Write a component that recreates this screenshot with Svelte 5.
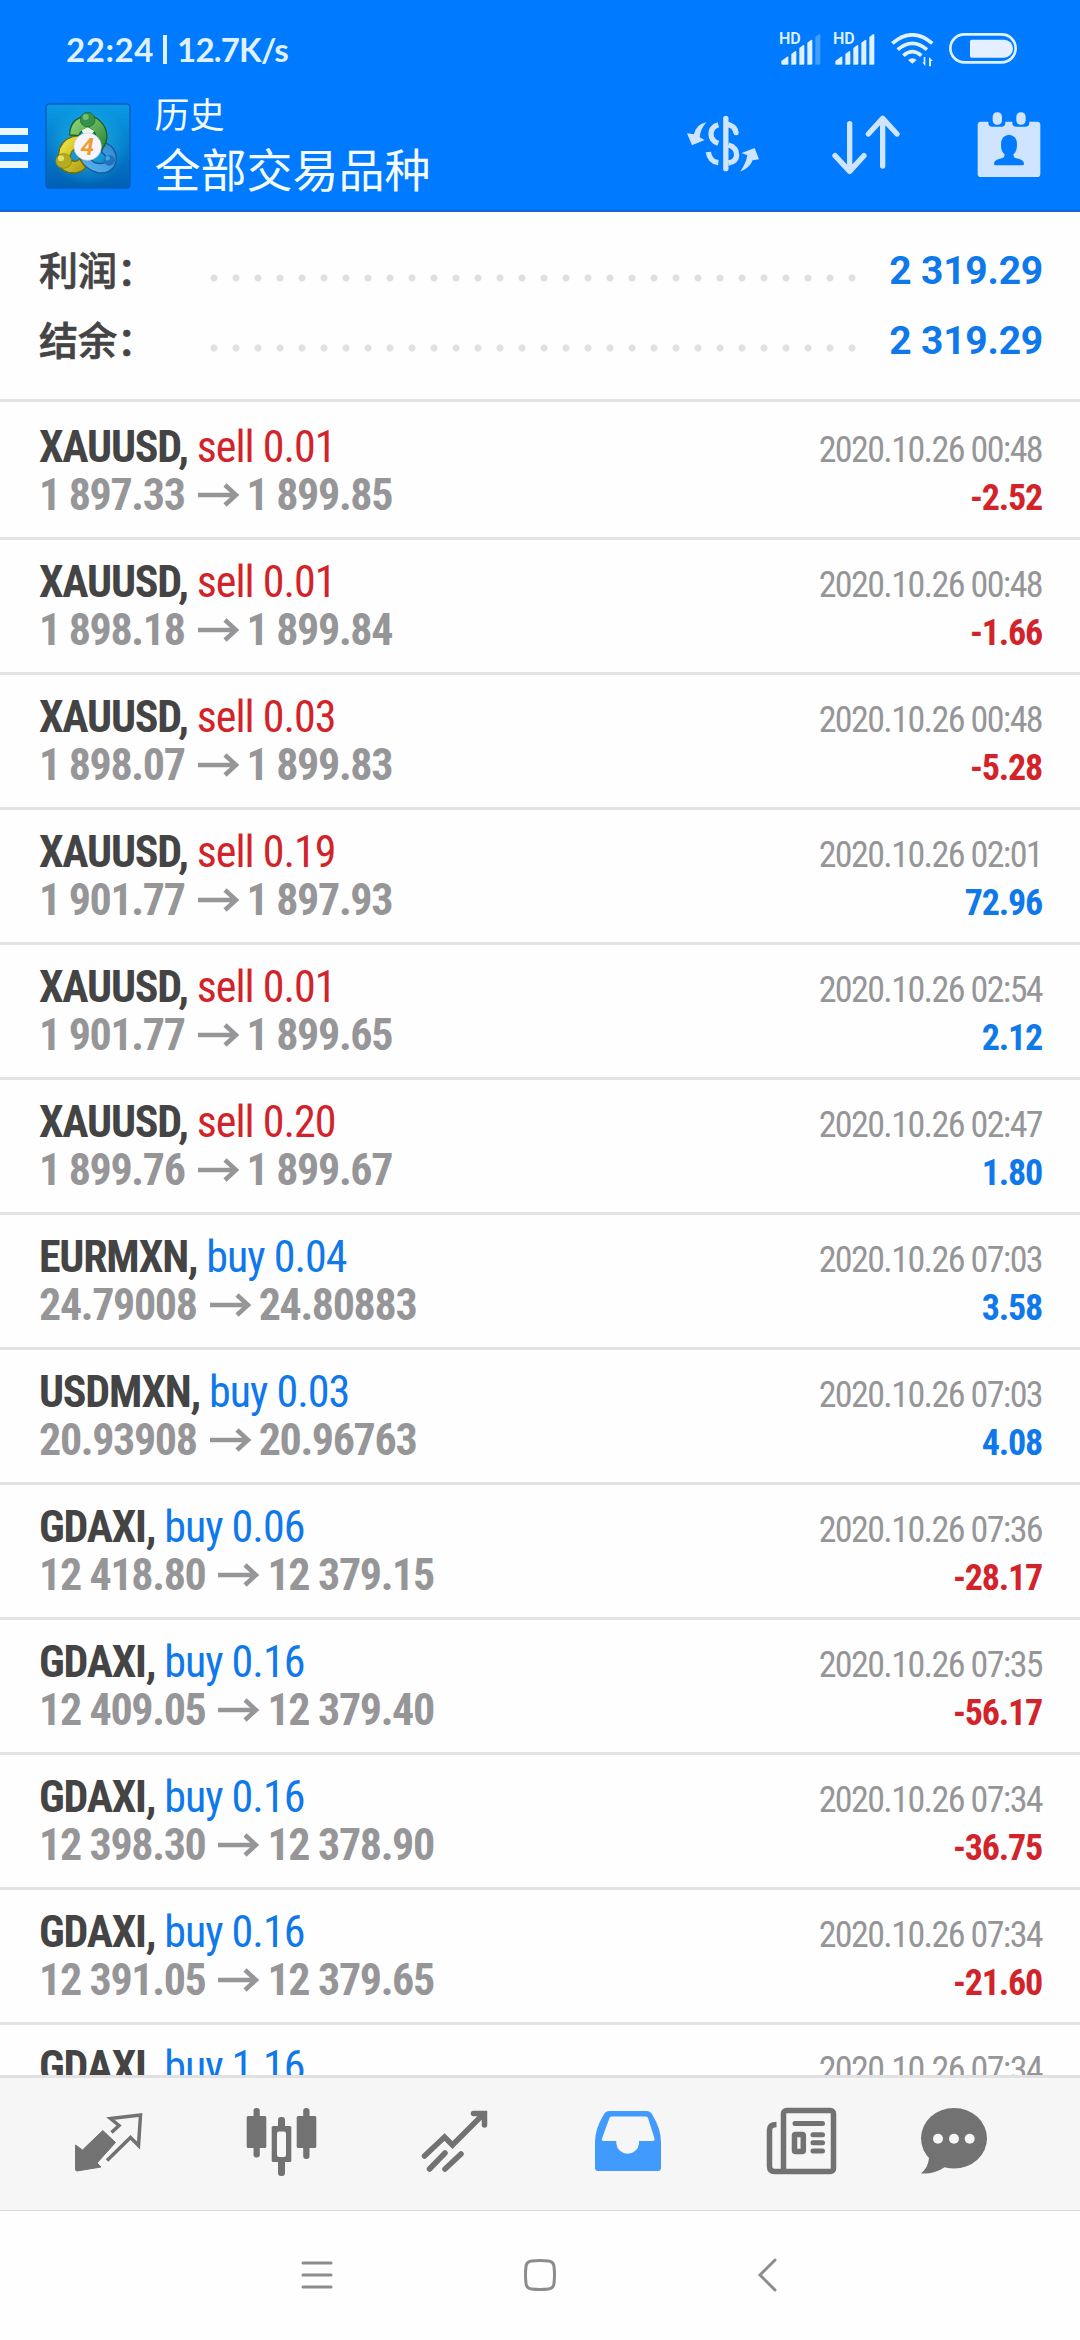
<script>
  const summary = [
    { label: '利润：', value: '2 319.29' },
    { label: '结余：', value: '2 319.29' },
  ];

  const deals = [
    { symbol: 'XAUUSD', side: 'sell', lots: '0.01', open: '1 897.33', close: '1 899.85', time: '2020.10.26 00:48', profit: '-2.52' },
    { symbol: 'XAUUSD', side: 'sell', lots: '0.01', open: '1 898.18', close: '1 899.84', time: '2020.10.26 00:48', profit: '-1.66' },
    { symbol: 'XAUUSD', side: 'sell', lots: '0.03', open: '1 898.07', close: '1 899.83', time: '2020.10.26 00:48', profit: '-5.28' },
    { symbol: 'XAUUSD', side: 'sell', lots: '0.19', open: '1 901.77', close: '1 897.93', time: '2020.10.26 02:01', profit: '72.96' },
    { symbol: 'XAUUSD', side: 'sell', lots: '0.01', open: '1 901.77', close: '1 899.65', time: '2020.10.26 02:54', profit: '2.12' },
    { symbol: 'XAUUSD', side: 'sell', lots: '0.20', open: '1 899.76', close: '1 899.67', time: '2020.10.26 02:47', profit: '1.80' },
    { symbol: 'EURMXN', side: 'buy', lots: '0.04', open: '24.79008', close: '24.80883', time: '2020.10.26 07:03', profit: '3.58' },
    { symbol: 'USDMXN', side: 'buy', lots: '0.03', open: '20.93908', close: '20.96763', time: '2020.10.26 07:03', profit: '4.08' },
    { symbol: 'GDAXI', side: 'buy', lots: '0.06', open: '12 418.80', close: '12 379.15', time: '2020.10.26 07:36', profit: '-28.17' },
    { symbol: 'GDAXI', side: 'buy', lots: '0.16', open: '12 409.05', close: '12 379.40', time: '2020.10.26 07:35', profit: '-56.17' },
    { symbol: 'GDAXI', side: 'buy', lots: '0.16', open: '12 398.30', close: '12 378.90', time: '2020.10.26 07:34', profit: '-36.75' },
    { symbol: 'GDAXI', side: 'buy', lots: '0.16', open: '12 391.05', close: '12 379.65', time: '2020.10.26 07:34', profit: '-21.60' },
    { symbol: 'GDAXI', side: 'buy', lots: '1.16', open: '', close: '', time: '2020.10.26 07:34', profit: '' },
  ];

  // weak = last bar dimmed
  const sims = [{ weak: true }, { weak: false }];
</script>

<div class="screen">
  <header>
    <div class="status">
      <div class="clock"><span>22:24</span><i></i><span class="speed">12.7K/s</span></div>
      <div class="status-icons">
        {#each sims as sim}
          <div class="sim">
            <span class="hd">HD</span>
            <svg width="42" height="32" viewBox="0 0 126 96">
              <path d="M4 92v-8l17-13q4-2 4 2v19q0 3-3 3H6z" />
              <path d="M34 95V63l11-8q4-2 4 2v35l-2 3z" />
              <path d="M58 95V45l11-8q4-2 4 2v53l-2 3z" />
              <path d="M82 95V29l11-8q4-2 4 2v69l-2 3z" />
              <path d="M106 95V12l11-8q4-2 4 2v86l-2 3z" opacity={sim.weak ? 0.3 : 1} />
            </svg>
          </div>
        {/each}
        <svg class="wifi" width="43" height="34" viewBox="0 0 129 102">
          <g fill="none" stroke="#dff1ff" stroke-width="11">
            <path d="M4 31Q64-20 124 31" />
            <path d="M20 50Q64 12 108 50" />
            <path d="M37 68Q64 44 91 68" />
          </g>
          <path d="M51 81q13-11 26 0l-13 11z" />
          <path d="M103 72v28L94 88h4V72zM114 100V72l12 12h-6v16z" />
        </svg>
        <svg width="68" height="31" viewBox="0 0 204 93">
          <rect x="4" y="4" width="196" height="84" rx="42" fill="none" stroke="#dff1ff" stroke-width="8" />
          <path d="M68 20H165a27 27 0 0 1 0 54H68q-5 0-5-5V25q0-5 5-5z" fill="#e4efff" />
        </svg>
      </div>
    </div>

    <div class="toolbar">
      <div class="burger"><i></i><i></i><i></i></div>
      <svg class="logo" width="86" height="86" viewBox="0 0 258 258">
        <defs>
          <linearGradient id="tile" x1="0" y1="0" x2="0" y2="1">
            <stop offset="0" stop-color="#0a9ae4" />
            <stop offset="1" stop-color="#0060b4" />
          </linearGradient>
          <radialGradient id="glow">
            <stop offset="0" stop-color="#27c3e8" stop-opacity=".8" />
            <stop offset="1" stop-color="#27c3e8" stop-opacity="0" />
          </radialGradient>
          <linearGradient id="green" x1="0" y1="0" x2="1" y2="1">
            <stop offset="0" stop-color="#9bdc7b" />
            <stop offset="1" stop-color="#1f7f33" />
          </linearGradient>
          <linearGradient id="yellow" x1="0" y1="0" x2="1" y2="1">
            <stop offset="0" stop-color="#fff04a" />
            <stop offset="1" stop-color="#a99a13" />
          </linearGradient>
          <linearGradient id="blue" x1="1" y1="0" x2="0" y2="1">
            <stop offset="0" stop-color="#2c86cf" />
            <stop offset="1" stop-color="#5fb9f0" />
          </linearGradient>
        </defs>
        <rect x="3" y="3" width="252" height="252" rx="10" fill="url(#tile)" stroke="#0b5cb8" stroke-width="4" />
        <circle cx="128" cy="128" r="120" fill="url(#glow)" />
        <path d="M175 118Q214 128 214 172Q206 212 160 210Q122 200 104 168L134 164Q150 190 182 178Q190 160 170 148z" fill="url(#blue)" stroke="#16579c" stroke-width="4" />
        <path d="M102 98Q60 100 44 136L36 176Q50 212 92 210Q112 206 122 194L104 168Q88 182 76 168Q72 142 100 134z" fill="url(#yellow)" stroke="#6b6b14" stroke-width="4" />
        <path d="M74 96Q74 54 110 42H148Q186 62 186 104Q182 130 166 144L150 116Q158 86 130 74Q108 80 102 98z" fill="url(#green)" stroke="#17602a" stroke-width="4" />
        <path d="M110 82l18-10 20 12-10 12h-20z" fill="#e9f7e4" />
        <circle cx="128" cy="50" r="22" fill="#379148" stroke="#17602a" stroke-width="2" />
        <circle cx="122" cy="42" r="9" fill="#74bd72" />
        <ellipse cx="56" cy="174" rx="24" ry="22" fill="#b4ad22" stroke="#7c7815" stroke-width="2" />
        <circle cx="48" cy="166" r="9" fill="#e4e060" />
        <ellipse cx="193" cy="172" rx="17" ry="16" fill="#1f72bd" />
        <circle cx="188" cy="166" r="7" fill="#4ba0e0" />
        <circle cx="128" cy="131" r="41" fill="#f6f5fb" stroke="#ccd3d8" stroke-width="2" />
        <text x="127" y="157" text-anchor="middle" font-family="Roboto, sans-serif" font-style="italic" font-weight="600" font-size="74" fill="#f39a2c">4</text>
      </svg>
      <div class="titles">
        <div class="title">历史</div>
        <div class="subtitle">全部交易品种</div>
      </div>
      <div class="actions">
        <svg width="76" height="66" viewBox="132 338 228 198">
          <path d="M196 369Q166 374 159 405L138 402L153 438L191 422L176 414Q178 390 196 369z" />
          <path d="M298 516Q325 508 335 483L354 480L341 446L302 461L319 468Q315 493 298 516z" />
          <g fill="none" stroke="#cfe4ff" stroke-width="16">
            <path d="M254.500 357V508" stroke-linecap="round" />
            <path d="M232 376Q210 383 210 404Q210 425 232 432M202 458Q206 487 232 490M262 437Q287 444 287 466Q287 487 262 491" />
            <path d="M262 376Q282 381 285 400" stroke-linecap="round" />
          </g>
        </svg>
        <svg width="72" height="66" viewBox="567 338 216 198">
          <g fill="none" stroke="#cfe4ff" stroke-width="16" stroke-linecap="round" stroke-linejoin="round">
            <path d="M626 373V516M582 469L626 516L669 469" />
            <path d="M725 500V357M682 404L725 357L768 404" />
          </g>
        </svg>
        <svg width="66" height="66" viewBox="1005 338 198 198">
          <rect x="1010" y="367" width="188" height="166" rx="10" />
          <path d="M1042 360h51v10q0 12-12 12h-27q-12 0-12-12zM1114 360h51v10q0 12-12 12h-27q-12 0-12-12z" fill="#007aff" />
          <rect x="1055" y="339" width="28" height="37" rx="13" />
          <rect x="1126" y="339" width="28" height="37" rx="13" />
          <path d="M1104 406q24 2 24 30q0 20-11 29q0 8 4 10l20 6q8 4 8 12q0 5-5 5h-80q-5 0-5-5q0-8 8-12l20-6q4-2 4-10q-11-9-11-29q0-28 24-30z" fill="#007aff" />
        </svg>
      </div>
    </div>
  </header>

  <section class="summary">
    {#each summary as s}
      <div class="sum-row">
        <span class="sum-label">{s.label}</span>
        <span class="dots"></span>
        <span class="sum-value">{s.value}</span>
      </div>
    {/each}
  </section>

  <main>
    {#each deals as d}
      <div class="deal">
        <div class="left">
          <div class="name"><b>{d.symbol},</b> <span class={d.side}>{d.side} {d.lots}</span></div>
          {#if d.open}
            <div class="prices">
              <span>{d.open}</span>
              <svg width="42" height="24" viewBox="0 0 42 24"><path d="M0 12H38M27 2L38 12L27 22" fill="none" stroke="#969698" stroke-width="4.500" /></svg>
              <span>{d.close}</span>
            </div>
          {/if}
        </div>
        <div class="right">
          <div class="time">{d.time}</div>
          <div class="profit" class:loss={d.profit.startsWith('-')}>{d.profit}</div>
        </div>
      </div>
    {/each}
  </main>

  <nav class="tabs">
    <!-- Quotes -->
    <svg width="72" height="80" viewBox="72.5 0 72 80">
      <path d="M75 45L82 50L102.300 30.500L115 42.500L96.500 63L100.500 67L76.500 71Q75 71 75 69z" stroke="#727272" stroke-linejoin="round" />
      <path d="M111 32.500L118.500 25.500L110 18.500L140 15L138 45.500L130 37.500L106.500 60.500" fill="none" stroke="#727272" stroke-width="3.500" />
    </svg>
    <!-- Charts -->
    <svg width="72" height="80" viewBox="245.500 0 72 80">
      <rect x="246.200" y="16" width="19.600" height="32" rx="1.500" />
      <rect x="253" y="8" width="6.300" height="49.500" rx="3" />
      <rect x="296.200" y="16" width="19.600" height="32" rx="1.500" />
      <rect x="302.700" y="8" width="6.300" height="51" rx="3" />
      <rect x="277.500" y="17" width="7" height="59" rx="3" />
      <rect x="271.200" y="26" width="19.600" height="36" rx="1.500" />
      <rect x="276.500" y="31.500" width="9" height="25.500" rx="2" fill="#f6f6f6" />
    </svg>
    <!-- Trade -->
    <svg width="72" height="80" viewBox="418.500 0 72 80">
      <g fill="none" stroke="#727272" stroke-width="5.500">
        <path d="M424 56L444 37L452 45L483 14" stroke-linecap="round" />
        <path d="M473 13.500H484V25" stroke-linecap="round" />
        <path d="M444.500 53L429 69M460.500 54L444.500 69" stroke-linecap="round" />
      </g>
    </svg>
    <!-- History -->
    <svg width="72" height="80" viewBox="591.500 0 72 80">
      <path fill="#419bff" fill-rule="evenodd" d="M609 11H646Q650 11 652 15Q660.500 29 660.500 42V68Q660.500 71 657.500 71H597.500Q594.500 71 594.500 68V42Q594.500 29 603 15Q605 11 609 11zM611 16.500Q609.500 16.500 609 18L601.500 38.500Q601 41 603 41H615.800V43.500A11.400 11.400 0 0 0 638.500 43.500V41H652Q654.500 41 654 38.500L647.500 18Q647 16.500 645.500 16.500z" />
    </svg>
    <!-- News -->
    <svg width="72" height="80" viewBox="764.500 0 72 80">
      <g fill="none" stroke="#727272" stroke-width="5.500">
        <rect x="783" y="10.500" width="50" height="61" rx="3" />
        <path d="M776 24.500Q769 24.500 769 30V66Q769 71.500 774 71.500H785" />
        <rect x="794" y="34.500" width="8.800" height="17" rx="1" />
        <path d="M794.500 23.500H822M812.500 34.700H822M812.500 42.700H822M812.500 51H822" stroke-width="5" stroke-linecap="round" />
      </g>
    </svg>
    <!-- Chat -->
    <svg width="72" height="80" viewBox="916 0 72 80">
      <ellipse cx="953" cy="38.300" rx="33" ry="30.300" />
      <path d="M926 52L928 58Q927 68 920 73.500Q933 74.500 944 67z" />
      <g fill="#f6f6f6">
        <circle cx="937" cy="38.700" r="5" />
        <circle cx="953" cy="38.700" r="5" />
        <circle cx="968.700" cy="38.700" r="5" />
      </g>
    </svg>
  </nav>

  <footer>
    <svg width="36" height="36" viewBox="0 0 36 36"><path d="M4 6H32M4 18H32M4 30H32" /></svg>
    <svg width="36" height="36" viewBox="0 0 36 36"><path d="M9.500 4Q18 3 26.500 4Q31.500 4.500 32 9.500Q33 18 32 26.500Q31.500 31.500 26.500 32Q18 33 9.500 32Q4.500 31.500 4 26.500Q3 18 4 9.500Q4.500 4.500 9.500 4z" /></svg>
    <svg width="36" height="36" viewBox="0 0 36 36"><path d="M30 3L15 18L30 33" /></svg>
  </footer>
</div>

<style>
  :global(body) {
    margin: 0;
    background: #fff;
  }

  .screen {
    width: 1080px;
    height: 2340px;
    display: flex;
    flex-direction: column;
    overflow: hidden;
    background: #fefefe;
    font-family: Roboto, 'Noto Sans CJK SC', sans-serif;
  }

  svg {
    display: block;
    flex: none;
  }

  header {
    height: 210px;
    flex: none;
    background: #007aff;
    border-bottom: 2px solid #1a66d0;
    color: #f4fbff;
  }

  .status {
    height: 98px;
    display: flex;
    justify-content: space-between;
    padding: 0 63px 0 66px;
    box-sizing: border-box;
  }

  .clock {
    display: flex;
    font-family: Lato, sans-serif;
    font-weight: 700;
    font-size: 33px;
    line-height: 40px;
    padding-top: 29px;
    letter-spacing: 0.6px;
    color: #dff1ff;
  }

  .clock i {
    width: 4px;
    height: 29px;
    margin: 6px 10px 0 9px;
    background: #dff1ff;
  }

  .clock .speed {
    letter-spacing: -0.8px;
  }

  .status-icons {
    display: flex;
    padding-top: 33px;
    fill: #dff1ff;
  }

  .sim {
    position: relative;
    width: 42px;
    margin-right: 12px;
  }

  .hd {
    position: absolute;
    left: -1px;
    top: -2px;
    font-size: 16px;
    line-height: 16px;
    font-weight: 600;
    color: #dff1ff;
  }

  .wifi {
    margin: 0 15px 0 3px;
  }

  .toolbar {
    height: 112px;
    display: flex;
    align-items: flex-start;
  }

  .burger {
    width: 27.500px;
    display: flex;
    flex-direction: column;
    gap: 9px;
    padding-top: 30px;
  }

  .burger i {
    height: 7.300px;
    background: #ebf8ff;
  }

  .logo {
    margin: 5px 24px 0 17px;
  }

  .titles {
    margin-top: -3px;
    font-family: 'Noto Sans CJK SC', sans-serif;
    font-weight: 400;
  }

  .title {
    font-size: 35px;
    line-height: 36px;
  }

  .subtitle {
    font-size: 46px;
    line-height: 54px;
    margin-top: 9px;
  }

  .actions {
    margin-left: auto;
    margin-right: 38px;
    padding-top: 14px;
    display: flex;
    fill: #cfe4ff;
  }

  .actions svg:nth-child(2) {
    margin: 0 74px 0 69px;
  }

  .summary {
    height: 190px;
    flex: none;
    box-sizing: border-box;
    padding: 24px 38px 0 39px;
    border-bottom: 3px solid #e3e3e3;
  }

  .sum-row {
    display: flex;
    height: 70px;
  }

  .sum-label {
    width: 160px;
    margin-top: -3px;
    font-family: 'Noto Sans CJK SC', sans-serif;
    font-size: 39px;
    line-height: 70px;
    font-weight: 500;
    -webkit-text-stroke: 0.7px #444;
    color: #444;
  }

  .dots {
    width: 660px;
    height: 8px;
    margin: 38px 0 0 4px;
    background: radial-gradient(circle at center, #e0e0e0 3px, transparent 4px) 0 0 / 22px 8px repeat-x;
  }

  .sum-value {
    margin-left: auto;
    margin-right: -1px;
    font-size: 39px;
    line-height: 71px;
    letter-spacing: -0.2px;
    font-weight: 700;
    color: #0f78ea;
  }

  main {
    height: 1673px;
    flex: none;
    box-sizing: border-box;
    padding-top: 3px;
    overflow: hidden;
    font-stretch: 75%;
  }

  .deal {
    display: flex;
    justify-content: space-between;
    height: 132px;
    padding: 0 38px 0 39px;
    border-bottom: 3px solid #e3e3e3;
    line-height: 48px;
    white-space: nowrap;
  }

  .left {
    padding-top: 18px;
    font-size: 44px;
    letter-spacing: -1.1px;
  }

  .name b {
    letter-spacing: -1.25px;
    color: #444;
  }

  .sell {
    color: #d2232a;
  }

  .buy {
    color: #0f78ea;
  }

  .name span {
    letter-spacing: -1px;
  }

  .prices {
    display: flex;
    align-items: center;
    font-weight: 700;
    letter-spacing: -1.35px;
    color: #969698;
  }

  .prices svg {
    margin: 0 7px 0 13px;
  }

  .right {
    padding-top: 21px;
    font-size: 36px;
    text-align: right;
  }

  .time {
    letter-spacing: -1.6px;
    color: #969698;
  }

  .profit {
    font-weight: 700;
    letter-spacing: -1.2px;
    color: #0f78ea;
  }

  .profit.loss {
    color: #d2232a;
  }

  .tabs {
    height: 136px;
    flex: none;
    box-sizing: border-box;
    border-top: 3px solid #e1e1e1;
    border-bottom: 1px solid #d9d9d9;
    background: #f6f6f6;
    padding: 22px 0 0 22px;
    display: grid;
    grid-template-columns: repeat(5, 173px) 132px;
    justify-items: center;
    fill: #727272;
  }

  footer {
    flex: 1;
    display: flex;
    gap: 187px;
    padding: 46px 0 0 299px;
    fill: none;
    stroke: #8c8c8c;
    stroke-width: 3;
    stroke-linecap: round;
  }
</style>
